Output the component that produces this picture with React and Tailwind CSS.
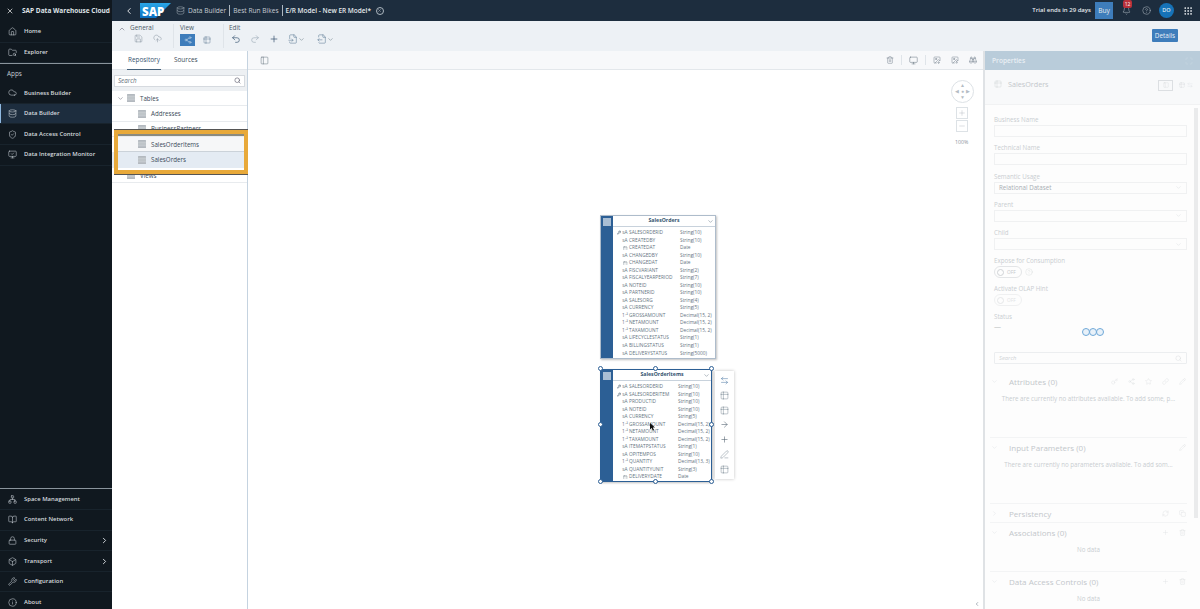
import {
  X, ChevronLeft, ChevronRight, ChevronDown, ChevronUp, Home, FolderSearch, Cloud, Database, ShieldCheck, MonitorCheck,
  Network, BookOpen, Lock, Box, Wrench, Info, Bell, CircleHelp, Grip, Save, CloudUpload, Share2, Table2, Undo2, Redo2,
  Plus, FileInput, FileOutput, PanelLeft, Trash2, Monitor, ImageDown, ImageUp, Binoculars, Search, Maximize, Minus,
  KeyRound, Calendar, ArrowRight, Pencil, RefreshCw, Copy, ArrowLeftRight, PenLine, Key, Star, Link,
} from "lucide-react";

const font = "font-['Open_Sans',sans-serif]";

// grey filled table glyph used in the repository tree
function TableIcon({ className }) {
  return (
    <svg width="8" height="8" viewBox="0 0 8 8" className={className}>
      <rect width="8" height="8" rx="0.5" fill="#b3b9bf" />
      <path d="M0 2.2H8M0 4H8M0 5.8H8" stroke="#e6e8ea" strokeWidth="0.5" />
    </svg>
  );
}

function NavItem({ icon: Icon, label, active, arrow }) {
  return (
    <div className={`h-[20.6px] shrink-0 flex items-center relative border-b border-[#18232c] ${active ? "bg-[#1d2d3e]" : ""}`}>
      {active && <div className="absolute left-0 top-0 bottom-0 w-[1px] bg-[#8fb8e0]" />}
      <div className="w-[24px] flex justify-center">
        <Icon size={9} strokeWidth={1.5} className="text-[#c4ccd3]" />
      </div>
      <span className="text-[5.9px] font-semibold text-[#d5dade]">{label}</span>
      {arrow && <ChevronRight size={9} strokeWidth={2.5} className="text-[#d5dade] ml-auto mr-[3px]" />}
    </div>
  );
}

function Sidebar() {
  return (
    <aside className="w-[112px] bg-[#10181f] flex flex-col shrink-0 overflow-hidden">
      <div className="h-[22px] shrink-0 flex items-center bg-[#10181f]">
        <X size={8} className="text-white ml-[6px] mr-[8px]" />
        <span className="text-[6.5px] font-bold text-[#dfe3e7] whitespace-nowrap">SAP Data Warehouse Cloud</span>
      </div>
      <NavItem icon={Home} label="Home" />
      <NavItem icon={FolderSearch} label="Explorer" />
      <div className="h-[1px] shrink-0 bg-[#8a949c]" />
      <div className="h-[19px] shrink-0 flex items-center pl-[7px] text-[6.4px] text-[#c4ccd3]">Apps</div>
      <NavItem icon={Cloud} label="Business Builder" />
      <NavItem icon={Database} label="Data Builder" active />
      <NavItem icon={ShieldCheck} label="Data Access Control" />
      <NavItem icon={MonitorCheck} label="Data Integration Monitor" />
      <div className="mt-auto h-[1px] shrink-0 bg-[#8a949c]" />
      <NavItem icon={Network} label="Space Management" />
      <NavItem icon={BookOpen} label="Content Network" />
      <NavItem icon={Lock} label="Security" arrow />
      <NavItem icon={Box} label="Transport" arrow />
      <NavItem icon={Wrench} label="Configuration" />
      <div className="-mb-[4px]">
        <NavItem icon={Info} label="About" />
      </div>
    </aside>
  );
}

function TopBar() {
  return (
    <header className="h-[21px] bg-[#1d2d3e] flex items-center text-[#d9dee3] shrink-0">
      <ChevronLeft size={10} strokeWidth={2} className="ml-[12px] mr-[6px] text-white" />
      <svg width="32" height="16" viewBox="0 0 32 16" className="shrink-0">
        <defs>
          <linearGradient id="saplogo" x1="0" y1="0" x2="0" y2="1">
            <stop offset="0" stopColor="#2aa6e8" />
            <stop offset="1" stopColor="#0b6fc0" />
          </linearGradient>
        </defs>
        <polygon points="0,0 31,0 16,15 0,15" fill="url(#saplogo)" />
        <text x="2" y="12.5" fontSize="11.5" fontWeight="800" fill="#fff" fontFamily="Open Sans, sans-serif">SAP</text>
      </svg>
      <Database size={9} strokeWidth={1.3} className="ml-[4px] mr-[3px] text-[#aeb8c1]" />
      <span className="text-[6.6px] text-[#c5ccd3]">Data Builder</span>
      <div className="w-[1px] h-[11px] bg-[#aeb8c1] mx-[3px]" />
      <span className="text-[6.6px] text-[#c5ccd3]">Best Run Bikes</span>
      <div className="w-[1px] h-[11px] bg-[#aeb8c1] mx-[3px]" />
      <span className="text-[6.5px] font-semibold text-[#e4e8eb]">E/R Model - New ER Model*</span>
      <div className="w-[8px] h-[8px] rounded-full border border-[#aeb8c1] ml-[5px] flex items-center justify-center">
        <X size={5} strokeWidth={2} className="text-[#aeb8c1]" />
      </div>
      <span className="ml-auto text-[6px] font-semibold text-[#e4e8eb]">Trial ends in 29 days</span>
      <div className="ml-[4px] w-[18px] h-[17px] bg-[#3e7dbb] flex items-center justify-center text-[6.6px] text-[#e4e8eb]">Buy</div>
      <div className="relative ml-[9px]">
        <Bell size={9} strokeWidth={1.4} className="text-[#aeb8c1]" />
        <div className="absolute -top-[6px] left-[1px] w-[9px] h-[8px] rounded-[2px] bg-[#b8303a] text-[5px] leading-[8px] text-center text-white">12</div>
      </div>
      <CircleHelp size={9} strokeWidth={1.4} className="ml-[11px] text-[#aeb8c1]" />
      <div className="ml-[8px] w-[15px] h-[15px] rounded-full bg-[#1673b8] flex items-center justify-center text-[5.5px] font-semibold text-[#dfe8ef]">DO</div>
      <Grip size={10} strokeWidth={2.4} className="ml-[9px] mr-[7px] text-[#d9dee3]" />
    </header>
  );
}

function ToolGroup({ title, children }) {
  return (
    <div className="flex flex-col h-full">
      <div className="text-[6.4px] leading-[8px] text-[#4c5a67] mt-[3px]">{title}</div>
      <div className="flex items-center mt-[2px]">{children}</div>
    </div>
  );
}

function Toolbar() {
  const ico = "text-[#7a8995]";
  return (
    <div className="h-[30px] bg-[#edf1f5] flex shrink-0 relative">
      <ChevronUp size={8} strokeWidth={1.5} className="text-[#556] ml-[6px] mt-[4px]" />
      <div className="ml-[4px] w-[43px]">
        <ToolGroup title="General">
          <Save size={9} strokeWidth={1.2} className={`${ico} ml-[4px]`} />
          <CloudUpload size={9} strokeWidth={1.2} className={`${ico} ml-[10px]`} />
        </ToolGroup>
      </div>
      <div className="w-[1px] h-[24px] bg-[#dfe4e9] mt-[3px] mr-[6px]" />
      <div className="w-[43px]">
        <ToolGroup title="View">
          <div className="w-[15px] h-[12px] bg-[#3e7dbb] flex items-center justify-center">
            <Share2 size={8} strokeWidth={1.3} className="text-[#dbe7f2]" />
          </div>
          <Table2 size={8} strokeWidth={1.3} className="text-[#4f6d8a] ml-[8px]" />
        </ToolGroup>
      </div>
      <div className="w-[1px] h-[24px] bg-[#dfe4e9] mt-[3px] mr-[5px]" />
      <ToolGroup title="Edit">
        <Undo2 size={10} strokeWidth={1.5} className="text-[#2c4a68] ml-[2px]" />
        <Redo2 size={10} strokeWidth={1.3} className="text-[#8fa0ae] ml-[9px]" />
        <Plus size={10} strokeWidth={1.6} className="text-[#2c4a68] ml-[9px]" />
        <FileInput size={10} strokeWidth={1.2} className="text-[#51708c] ml-[9px]" />
        <ChevronDown size={7} className="text-[#7a8995]" />
        <FileOutput size={10} strokeWidth={1.2} className="text-[#51708c] ml-[12px]" />
        <ChevronDown size={7} className="text-[#7a8995]" />
      </ToolGroup>
      <div className="ml-auto mr-[22px] mt-[8px] w-[26px] h-[13px] rounded-[1px] bg-[#3e7dbb] text-[6.4px] leading-[13px] text-center text-[#e8eff6]">Details</div>
    </div>
  );
}

function TreeRow({ label, indent, chevron, selected }) {
  return (
    <div className={`h-[15.4px] flex items-center border-b border-[#e8ebee] ${selected ? "bg-[#e4ebf3]" : ""}`} style={{ paddingLeft: indent }}>
      {chevron && <ChevronDown size={7} strokeWidth={1.6} className="text-[#556] mr-[3px]" />}
      <TableIcon className="mr-[5px]" />
      <span className="text-[6.2px] text-[#3a4a58]">{label}</span>
    </div>
  );
}

function LeftPanel() {
  return (
    <div className="w-[136px] shrink-0 border-r border-[#c5d3e0] flex flex-col bg-white relative">
      <div className="h-[19px] flex items-end bg-white border-b border-[#e3e7eb] shrink-0">
        <div className="ml-[15px] pb-[5px] px-[1px] border-b border-[#44607a] text-[6.4px] text-[#35536f] leading-[9px] w-[34px] -mb-[1px]">Repository</div>
        <div className="ml-[13px] pb-[5px] text-[6.4px] text-[#3a4a58] leading-[9px]">Sources</div>
      </div>
      <div className="h-[21px] bg-[#edf0f3] flex items-center px-[2px] shrink-0">
        <div className="w-full h-[12px] bg-white border border-[#d6dadf] flex items-center justify-between px-[3px]">
          <span className="text-[6.2px] italic text-[#606d78]">Search</span>
          <Search size={7} className="text-[#556]" />
        </div>
      </div>
      <TreeRow label="Tables" indent={5} chevron />
      <TreeRow label="Addresses" indent={26} />
      <TreeRow label="BusinessPartners" indent={26} />
      <TreeRow label="SalesOrderItems" indent={26} />
      <TreeRow label="SalesOrders" indent={26} selected />
      <TreeRow label="Views" indent={15} />
      {/* highlight callout laid over the tree */}
      <div className="absolute left-[2px] top-[79px] w-[134px] h-[44px] border-[4px] border-[#e8a93a] shadow-[0_-1px_0_#555,0_1px_0_#555,inset_0_2px_0_#8a8a80]">
        <div className="h-[15.4px] mt-[3px] bg-[#f6f7f8] border-b border-[#cbd2d9] flex items-center pl-[20px]">
          <TableIcon className="mr-[5px]" />
          <span className="text-[6.2px] text-[#3a4a58]">SalesOrderItems</span>
        </div>
        <div className="h-[15.4px] bg-[#e4ebf3] flex items-center pl-[20px]">
          <TableIcon className="mr-[5px]" />
          <span className="text-[6.2px] text-[#3a4a58]">SalesOrders</span>
        </div>
      </div>
    </div>
  );
}

const s10 = "String(10)";
const dec = "Decimal(15, 2)";
const orderRows = [
  ["key", "SALESORDERID", s10], ["a", "CREATEDBY", s10], ["d", "CREATEDAT", "Date"], ["a", "CHANGEDBY", s10],
  ["d", "CHANGEDAT", "Date"], ["a", "FISCVARIANT", "String(2)"], ["a", "FISCALYEARPERIOD", "String(7)"], ["a", "NOTEID", s10],
  ["a", "PARTNERID", s10], ["a", "SALESORG", "String(4)"], ["a", "CURRENCY", "String(5)"], ["n", "GROSSAMOUNT", dec],
  ["n", "NETAMOUNT", dec], ["n", "TAXAMOUNT", dec], ["a", "LIFECYCLESTATUS", "String(1)"], ["a", "BILLINGSTATUS", "String(1)"],
  ["a", "DELIVERYSTATUS", "String(5000)"],
];
const itemRows = [
  ["key", "SALESORDERID", s10], ["key", "SALESORDERITEM", s10], ["a", "PRODUCTID", s10], ["a", "NOTEID", s10],
  ["a", "CURRENCY", "String(5)"], ["n", "GROSSAMOUNT", dec], ["n", "NETAMOUNT", dec], ["n", "TAXAMOUNT", dec],
  ["a", "ITEMATPSTATUS", "String(1)"], ["a", "OPITEMPOS", s10], ["n", "QUANTITY", "Decimal(13, 3)"], ["a", "QUANTITYUNIT", "String(3)"],
  ["d", "DELIVERYDATE", "Date"],
];

function AttrRow({ kind, name, type, typeCol }) {
  return (
    <div className="h-[7.52px] flex items-center text-[4.8px] leading-[7px] text-[#66747f] whitespace-nowrap">
      <div className="w-[4px] flex justify-center">
        {kind === "key" && <KeyRound size={5} strokeWidth={2.4} className="text-[#40566b]" />}
      </div>
      <div className="w-[7px] pl-[1px] text-center">
        {kind === "a" || kind === "key" ? "sA" : kind === "n" ? "1\u207a\u00b2" : <Calendar size={4.5} strokeWidth={1.5} className="ml-[1px]" />}
      </div>
      <span className="ml-[1px]" style={{ width: typeCol }}>{name}</span>
      <span>{type}</span>
    </div>
  );
}

function EntityCard({ title, rows, typeCol, className }) {
  return (
    <div className={`absolute flex bg-white border border-[#aebccb] shadow-[1px_1px_2px_rgba(0,0,0,0.25)] ${className}`}>
      <div className="w-[12px] bg-[#2c5f95] shrink-0">
        <div className="m-[2px] h-[8px] bg-[#a9bed4]" />
      </div>
      <div className="flex-1 min-w-0">
        <div className="h-[11px] flex items-center justify-center relative border-b border-[#c8d2dc] text-[5.2px] font-bold text-[#33536f]">
          {title}
          <ChevronDown size={7} strokeWidth={1.4} className="absolute right-[1px] top-[2px] text-[#4a5d70]" />
        </div>
        <div className="mt-[2px] pl-[4px]">
          {rows.map((r) => (
            <AttrRow key={r[1]} kind={r[0]} name={r[1]} type={r[2]} typeCol={typeCol} />
          ))}
        </div>
      </div>
    </div>
  );
}

function Handle({ className }) {
  return <div className={`absolute w-[5px] h-[5px] rounded-full bg-white border border-[#2c5f95] ${className}`} />;
}

function Canvas() {
  return (
    <div className="flex-1 min-w-0 flex flex-col bg-white">
      <div className="h-[19px] shrink-0 flex items-center border-b border-[#e3e7eb] bg-[#f7f8fa] text-[#5f6e7b]">
        <PanelLeft size={9} strokeWidth={1.3} className="ml-[12px]" />
        <div className="ml-auto flex items-center mr-[6px]">
          <Trash2 size={8} strokeWidth={1.3} />
          <div className="w-[1px] h-[10px] bg-[#dfe4e9] mx-[7px]" />
          <Monitor size={9} strokeWidth={1.3} />
          <div className="w-[1px] h-[10px] bg-[#dfe4e9] mx-[7px]" />
          <ImageDown size={8} strokeWidth={1.3} className="ml-[0px]" />
          <ImageUp size={8} strokeWidth={1.3} className="ml-[10px]" />
          <Binoculars size={8} strokeWidth={1.3} className="ml-[10px]" />
        </div>
      </div>
      {/* free canvas: nodes are placed by diagram coordinates */}
      <div className="flex-1 relative">
        <div className="absolute left-[703px] top-[10px] w-[23px] h-[23px] rounded-full border border-[#dde2e6] flex items-center justify-center">
          <div className="grid grid-cols-3 grid-rows-3 w-[17px] h-[17px] place-items-center text-[#b4bcc4] text-[5px] leading-none">
            <span /><span>▲</span><span />
            <span>◀</span><span>●</span><span>▶</span>
            <span /><span>▼</span><span />
          </div>
        </div>
        <div className="absolute left-[708px] top-[37px] w-[12px] h-[12px] border border-[#dde2e6] flex items-center justify-center">
          <Plus size={8} strokeWidth={1.2} className="text-[#a6afb7]" />
        </div>
        <div className="absolute left-[708px] top-[50px] w-[12px] h-[12px] border border-[#dde2e6] flex items-center justify-center">
          <Minus size={8} strokeWidth={1.2} className="text-[#a6afb7]" />
        </div>
        <div className="absolute left-[707px] top-[69px] text-[5.2px] text-[#8b959e]">100%</div>

        <EntityCard title="SalesOrders" rows={orderRows} typeCol={51} className="left-[352px] top-[145px] w-[116px] h-[144px]" />
        <EntityCard title="SalesOrderItems" rows={itemRows} typeCol={49} className="left-[352px] top-[299px] w-[112px] h-[113px] !border-[#2c5f95]" />
        <Handle className="left-[350px] top-[296px]" />
        <Handle className="left-[405px] top-[296px]" />
        <Handle className="left-[461px] top-[296px]" />
        <Handle className="left-[350px] top-[352px]" />
        <Handle className="left-[461px] top-[352px]" />
        <Handle className="left-[350px] top-[409px]" />
        <Handle className="left-[405px] top-[409px]" />
        <Handle className="left-[461px] top-[409px]" />

        <div className="absolute left-[467px] top-[301px] w-[19px] h-[108px] bg-white shadow-[0_0_3px_rgba(0,0,0,0.25)] flex flex-col items-center justify-between py-[5px] text-[#6f7f8d]">
          <ArrowLeftRight size={9} strokeWidth={1.3} className="text-[#3e6d9e]" />
          <Table2 size={9} strokeWidth={1.2} />
          <Table2 size={9} strokeWidth={1.2} />
          <ArrowRight size={9} strokeWidth={1.5} className="text-[#51606e]" />
          <Plus size={9} strokeWidth={1.5} className="text-[#51606e]" />
          <PenLine size={9} strokeWidth={1.2} />
          <Table2 size={9} strokeWidth={1.2} />
        </div>

        <svg width="8" height="8" viewBox="0 0 8 8" className="absolute left-[401px] top-[353px]">
          <path d="M1 0 L1 6.5 L2.6 5 L3.8 7.6 L5 7 L3.8 4.6 L6 4.4 Z" fill="#111" />
        </svg>
        <ChevronLeft size={6} className="absolute right-[3px] bottom-[2px] text-[#5f6d7a]" />
      </div>
    </div>
  );
}

function Field({ label, h = 28.3, value, select }) {
  return (
    <div className="flex flex-col" style={{ height: h }}>
      <div className="text-[6.2px] leading-[11px] text-[#c9cdd1]">{label}</div>
      <div className="h-[12px] border border-[#f0f1f2] flex items-center justify-between px-[4px] text-[6.2px] text-[#a8aeb3]">
        <span>{value}</span>
        {select && <ChevronDown size={7} strokeWidth={1.2} className="text-[#cfd3d6]" />}
      </div>
    </div>
  );
}

function Toggle({ faded }) {
  return (
    <div className={`w-[28px] h-[12px] rounded-full border border-[#e3e5e7] flex items-center pl-[2px] ${faded ? "opacity-50" : ""}`}>
      <div className="w-[7px] h-[7px] rounded-full border border-[#d0d3d6]" />
      <span className="ml-[3px] text-[4.8px] text-[#c4c8cb]">OFF</span>
    </div>
  );
}

function Section({ title, chevron = "down", icons = [], msg, h }) {
  const Chev = chevron === "down" ? ChevronDown : ChevronRight;
  return (
    <div className="flex flex-col border-b border-[#f3f4f5]" style={{ height: h }}>
      <div className="h-[19px] shrink-0 flex items-center text-[#c9cdd1]">
        <Chev size={7} strokeWidth={1.3} className="ml-[1px] text-[#d8dbde]" />
        <span className="ml-[11px] text-[8px] text-[#c3c7cb]">{title}</span>
        <div className="ml-auto flex items-center gap-[10px] mr-[1px] text-[#dcdfe2]">
          {icons.map((Icon, i) => (
            <Icon key={i} size={7} strokeWidth={1.3} />
          ))}
        </div>
      </div>
      {msg && <div className="mt-[3px] text-center text-[6.2px] text-[#c9cdd1] whitespace-nowrap overflow-hidden">{msg}</div>}
    </div>
  );
}

function Properties() {
  return (
    <div className="w-[217px] shrink-0 flex flex-col bg-[#fdfdfd] border-l-[2px] border-[#dfe2e5] overflow-hidden">
      <div className="h-[19px] bg-[#b9ccda] flex items-center justify-between px-[7px] shrink-0">
        <span className="text-[6.6px] font-semibold text-[#e9eff4]">Properties</span>
        <Maximize size={8} strokeWidth={1} className="text-[#d4e0e9]" />
      </div>
      <div className="h-[35px] bg-[#f8f9fa] flex items-center pl-[9px] pr-[7px] shrink-0 border-b border-[#f1f2f3]">
        <Table2 size={8} strokeWidth={1.1} className="text-[#c8ccd0] -mt-[6px]" />
        <span className="ml-[6px] text-[7.2px] text-[#c3c7cb] -mt-[6px]">SalesOrders</span>
        <div className="ml-auto w-[15px] h-[11px] border border-[#dcdfe2] -mt-[4px] flex items-center justify-center">
          <PanelLeft size={6} strokeWidth={1.1} className="text-[#cfd3d6]" />
        </div>
        <Table2 size={6} strokeWidth={1.1} className="ml-[6px] text-[#cfd3d6] -mt-[4px]" />
        <ArrowLeftRight size={6} strokeWidth={1.1} className="ml-[2px] text-[#d8dbde] -mt-[4px]" />
      </div>
      <div className="flex-1 min-h-0 flex">
        <div className="flex-1 min-w-0 pl-[9px] pr-[7px] pt-[9px] relative">
          <Field label="Business Name" />
          <Field label="Technical Name" />
          <Field label="Semantic Usage" value="Relational Dataset" select />
          <Field label="Parent" select />
          <Field label="Child" select />
          <div className="h-[28px]">
            <div className="text-[6.2px] leading-[11px] text-[#c9cdd1]">Expose for Consumption</div>
            <div className="flex items-center gap-[3px]">
              <Toggle />
              <CircleHelp size={8} strokeWidth={1} className="text-[#cfd3d6]" />
            </div>
          </div>
          <div className="h-[28px]">
            <div className="text-[6.2px] leading-[11px] text-[#c9cdd1]">Activate OLAP Hint</div>
            <Toggle faded />
          </div>
          <div className="text-[6.2px] leading-[11px] text-[#c9cdd1]">Status</div>
          <div className="h-[30px] text-[7px] leading-[10px] text-[#b9bdc1]">—</div>
          {/* busy indicator over the form */}
          <div className="absolute left-[97px] top-[223px] flex -space-x-[1px]">
            <div className="w-[8px] h-[8px] rounded-full border-[1.5px] border-[#6fa8d8] bg-[#e8f1f9]" />
            <div className="w-[8px] h-[8px] rounded-full border-[1.5px] border-[#6fa8d8] bg-[#e8f1f9]" />
            <div className="w-[8px] h-[8px] rounded-full border-[1.5px] border-[#6fa8d8] bg-[#e8f1f9]" />
          </div>
          <div className="h-[12px] border border-[#eceef0] rounded-[1px] flex items-center justify-between px-[4px] mb-[8px]">
            <span className="text-[5.8px] italic text-[#d0d3d6]">Search</span>
            <Search size={7} strokeWidth={1.2} className="text-[#d0d3d6]" />
          </div>
          <div className="-ml-[4px]">
            <Section
              title="Attributes (0)"
              icons={[Key, Share2, Star, Link, Pencil]}
              msg="There are currently no attributes available. To add some, p..."
              h={66}
            />
            <Section
              title="Input Parameters (0)"
              icons={[Pencil]}
              msg="There are currently no parameters available. To add som..."
              h={66}
            />
            <Section title="Persistency" chevron="right" icons={[RefreshCw, Copy]} h={19} />
            <Section title="Associations (0)" icons={[Plus, Trash2]} msg="No data" h={49} />
            <Section title="Data Access Controls (0)" icons={[Plus, Trash2]} msg="No data" h={50} />
          </div>
        </div>
        <div className="w-[4px] mr-[2px] mt-[3px] h-[410px] bg-[#eaebec] shrink-0" />
      </div>
    </div>
  );
}

export default function App() {
  return (
    <div className={`h-[609px] w-[1200px] flex overflow-hidden ${font}`}>
      <Sidebar />
      <div className="flex-1 min-w-0 flex flex-col">
        <TopBar />
        <Toolbar />
        <div className="flex-1 min-h-0 flex">
          <LeftPanel />
          <Canvas />
          <Properties />
        </div>
      </div>
    </div>
  );
}
